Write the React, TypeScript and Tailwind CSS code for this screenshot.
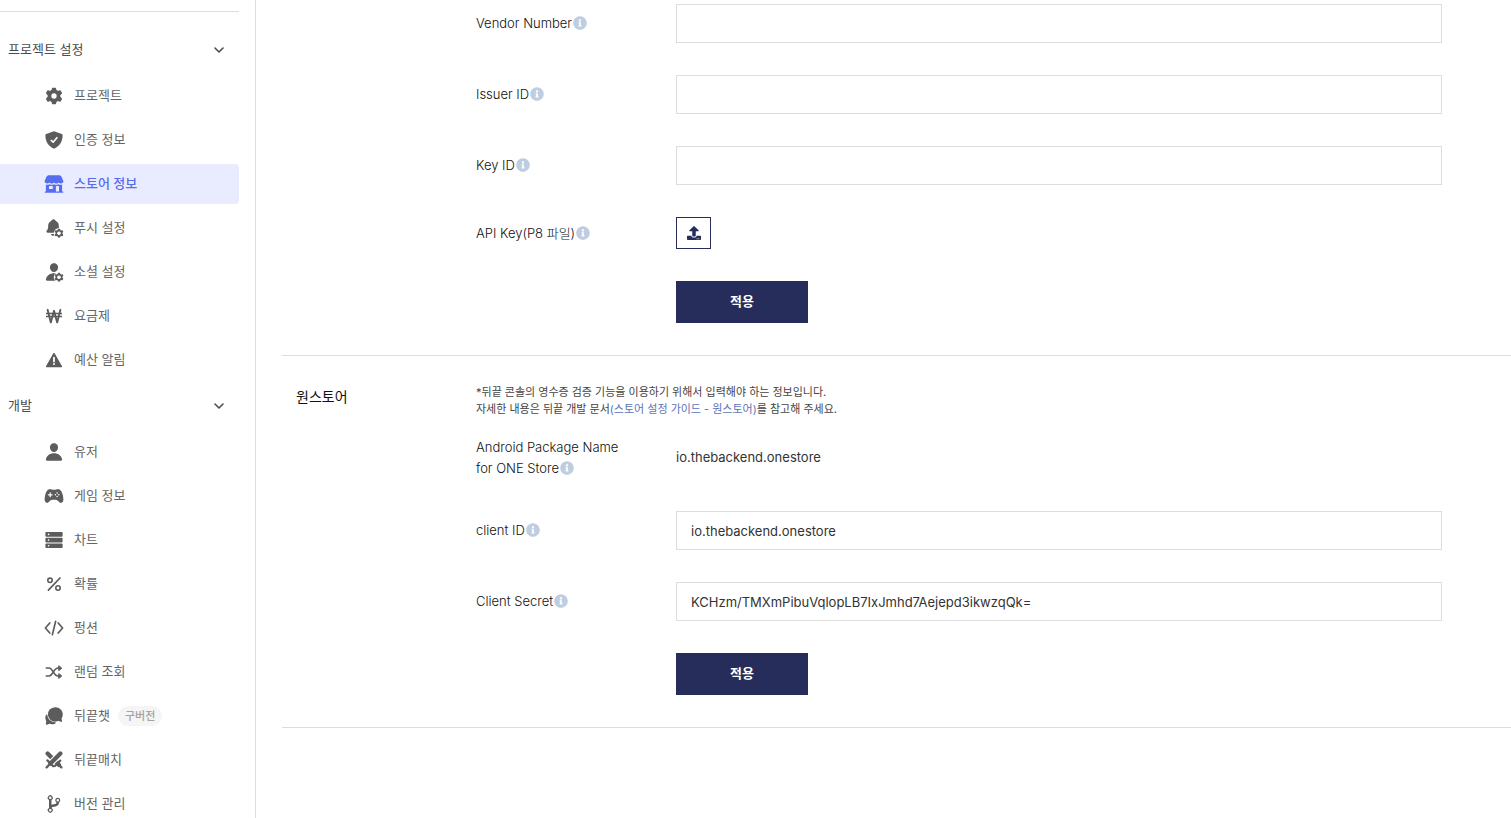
import { ReactNode, useState } from "react";
import clsx from "clsx";
import { IconType } from "react-icons";
import { FaGear } from "react-icons/fa6";
import { FaInfoCircle, FaUpload } from "react-icons/fa";
import {
  IoChatbubbles,
  IoGameController,
  IoGitBranch,
  IoNotifications,
  IoPerson,
  IoStorefront,
} from "react-icons/io5";

type MenuItem = { id: string; label: string; icon: ReactNode; badge?: string };

function Glyph({ children }: { children: ReactNode }) {
  return (
    <svg
      viewBox="0 0 20 20"
      width="20"
      height="20"
      fill="none"
      stroke="currentColor"
      strokeWidth="1.6"
      strokeLinecap="round"
      strokeLinejoin="round"
    >
      {children}
    </svg>
  );
}

function Gear() {
  return (
    <svg viewBox="0 0 20 20" width="20" height="20">
      <FaGear x={1.5} y={1.5} size={17} />
    </svg>
  );
}

function ShieldCheck() {
  return (
    <Glyph>
      <path
        d="M10 1.2 L17.8 4 Q18.7 4.4 18.6 5.5 C18.6 11.8 15.4 16.2 10.6 18.4 Q10 18.7 9.4 18.4 C4.6 16.2 1.4 11.8 1.4 5.5 Q1.3 4.4 2.2 4 Z"
        fill="currentColor"
        stroke="none"
      />
      <path d="M6.8 10 L9.1 12.2 L13.4 7.2" stroke="white" strokeLinecap="butt" />
    </Glyph>
  );
}

function WithGear({ Icon, size }: { Icon: IconType; size: number }) {
  return (
    <svg viewBox="0 0 20 20" width="20" height="20">
      <Icon size={size} />
      <circle cx="15" cy="15.2" r="5.2" fill="white" />
      <FaGear x={10.4} y={10.6} size={9.2} />
      <circle cx="15" cy="15.2" r="1.7" fill="white" />
    </svg>
  );
}

function Won() {
  return (
    <Glyph>
      <path d="M3.6 3.8 L6.8 16.4 L10 4.8 L13.2 16.4 L16.4 3.8" strokeWidth="1.9" />
      <path d="M2 7.5 H18 M2 10.5 H18" strokeWidth="1.3" strokeLinecap="butt" />
    </Glyph>
  );
}

function Warning() {
  return (
    <Glyph>
      <path d="M10 3.6 L17.4 16.6 H2.6 Z" fill="currentColor" strokeWidth="1.4" />
      <path d="M10 7.6 V11.6 M10 14 V14.2" stroke="white" strokeWidth="1.8" />
    </Glyph>
  );
}

function Server() {
  return (
    <Glyph>
      <g fill="currentColor" stroke="none">
        <rect x="1.4" y="2" width="17.2" height="4.7" rx="1" />
        <rect x="1.4" y="7.7" width="17.2" height="4.7" rx="1" />
        <rect x="1.4" y="13.4" width="17.2" height="4.7" rx="1" />
      </g>
      <path d="M4.6 4.3 V4.4 M4.6 10 V10.1 M4.6 15.7 V15.8" stroke="white" />
    </Glyph>
  );
}

function Percent() {
  return (
    <Glyph>
      <circle cx="6" cy="6.3" r="2.2" />
      <circle cx="14" cy="14" r="2.2" />
      <path d="M16 4 L4.4 16.2" strokeWidth="1.7" />
    </Glyph>
  );
}

function Code() {
  return (
    <Glyph>
      <path d="M5.8 5 L1.4 10 L5.8 15 M14.2 5 L18.6 10 L14.2 15 M11.6 3.4 L8.4 16.6" strokeWidth="1.7" />
    </Glyph>
  );
}

function Shuffle() {
  return (
    <Glyph>
      <path d="M2.4 6 H5 C9 6 9.6 14 14 14 H15.4 M2.4 14 H5 C9 14 9.6 6 14 6 H15.4" strokeWidth="1.7" />
      <path d="M15 4 L17.8 6.2 L15 8.4 Z M15 11.8 L17.8 14 L15 16.2 Z" fill="currentColor" strokeWidth="1" />
    </Glyph>
  );
}

function Swords() {
  return (
    <Glyph>
      <path d="M3.6 3.6 L15 15" strokeWidth="4.2" />
      <path d="M10.8 16 L16.2 10.6 M15 15 L17.4 17.4" strokeWidth="2.2" />
      <path d="M16.4 3.6 L6.4 13.6" stroke="white" strokeWidth="6.4" strokeLinecap="butt" />
      <path d="M16.4 3.6 L6.4 13.6" strokeWidth="4.2" />
      <path d="M3.4 10.4 L9.2 16.2 M5.6 14.4 L2.6 17.4" strokeWidth="2.2" />
    </Glyph>
  );
}

const PROJECT_MENU: MenuItem[] = [
  { id: "project", label: "프로젝트", icon: <Gear /> },
  { id: "auth", label: "인증 정보", icon: <ShieldCheck /> },
  { id: "store", label: "스토어 정보", icon: <IoStorefront size={20} /> },
  { id: "push", label: "푸시 설정", icon: <WithGear Icon={IoNotifications} size={19} /> },
  { id: "social", label: "소셜 설정", icon: <WithGear Icon={IoPerson} size={20} /> },
  { id: "plan", label: "요금제", icon: <Won /> },
  { id: "budget", label: "예산 알림", icon: <Warning /> },
];

const DEV_MENU: MenuItem[] = [
  { id: "user", label: "유저", icon: <IoPerson size={20} /> },
  { id: "game", label: "게임 정보", icon: <IoGameController size={20} /> },
  { id: "chart", label: "차트", icon: <Server /> },
  { id: "probability", label: "확률", icon: <Percent /> },
  { id: "function", label: "펑션", icon: <Code /> },
  { id: "random", label: "랜덤 조회", icon: <Shuffle /> },
  { id: "chat", label: "뒤끝챗", icon: <IoChatbubbles size={20} />, badge: "구버전" },
  { id: "match", label: "뒤끝매치", icon: <Swords /> },
  { id: "version", label: "버전 관리", icon: <IoGitBranch size={20} /> },
];

type MenuProps = {
  title: string;
  items: MenuItem[];
  active: string;
  onSelect: (id: string) => void;
};

function MenuGroup({ title, items, active, onSelect }: MenuProps) {
  const [open, setOpen] = useState(true);

  return (
    <div>
      <button
        onClick={() => setOpen(!open)}
        className="flex h-10 w-full items-center justify-between pr-2.5 pl-2 text-[#4b4b4b]"
      >
        {title}
        <span className={clsx(!open && "rotate-180")}>
          <Glyph>
            <path d="M6 8 L10 12 L14 8" />
          </Glyph>
        </span>
      </button>
      {open && (
        <ul className="my-1.5 flex flex-col gap-1">
          {items.map((item) => (
            <li key={item.id}>
              <button
                onClick={() => onSelect(item.id)}
                className={clsx(
                  "flex h-10 w-full items-center rounded-r pl-11",
                  active === item.id ? "bg-[#e9ecff] font-medium text-[#566df0]" : "text-[#666666]"
                )}
              >
                <span
                  className={clsx(
                    "mr-2.5 flex w-5 justify-center",
                    active !== item.id && "text-[#5c5c5c]"
                  )}
                >
                  {item.icon}
                </span>
                {item.label}
                {item.badge && (
                  <span className="ml-2 rounded-full bg-[#f5f5f5] px-[7px] text-[11px] leading-5 font-medium text-[#a3a3a3]">
                    {item.badge}
                  </span>
                )}
              </button>
            </li>
          ))}
        </ul>
      )}
    </div>
  );
}

function Info() {
  return <FaInfoCircle size={14} className="ml-px inline align-[-2px] text-[#bfcde0]" />;
}

function Row({ label, htmlFor, children }: { label: ReactNode; htmlFor?: string; children: ReactNode }) {
  return (
    <div className="flex items-center">
      <label htmlFor={htmlFor} className="w-[200px] shrink-0 leading-[21px] font-light text-[#111111]">
        {label}
        <Info />
      </label>
      <div className="flex flex-1">{children}</div>
    </div>
  );
}

function TextRow({ id, label, value = "" }: { id: string; label: string; value?: string }) {
  return (
    <Row label={label} htmlFor={id}>
      <input
        id={id}
        type="text"
        defaultValue={value}
        className="h-[39px] w-full border border-[#dddddd] px-3.5 outline-none focus:border-[#272d5b]"
      />
    </Row>
  );
}

function ApplyButton() {
  return (
    <button className="ml-[200px] h-[42px] w-[132px] self-start bg-[#272d5b] font-bold text-white">
      적용
    </button>
  );
}

export default function App() {
  const [active, setActive] = useState("store");

  return (
    <div className="flex h-screen overflow-hidden bg-white font-['Inter','Noto_Sans_CJK_KR',sans-serif] text-[13px] text-[#333333]">
      <aside className="w-64 shrink-0 overflow-hidden border-r border-[#dddddd] pt-[11px] pr-4">
        <hr className="mb-[18px] border-[#dddddd]" />
        <MenuGroup title="프로젝트 설정" items={PROJECT_MENU} active={active} onSelect={setActive} />
        <MenuGroup title="개발" items={DEV_MENU} active={active} onSelect={setActive} />
      </aside>

      <main className="flex-1 overflow-hidden pl-[26px]">
        <section className="flex border-b border-[#dddddd] pt-1 pr-[69px] pb-8 pl-[194px]">
          <div className="flex flex-1 flex-col gap-8">
            <TextRow id="vendor" label="Vendor Number" />
            <TextRow id="issuer" label="Issuer ID" />
            <TextRow id="key" label="Key ID" />
            <Row label="API Key(P8 파일)" htmlFor="p8">
              <button
                id="p8"
                aria-label="업로드"
                className="flex h-8 w-[35px] items-center justify-center border border-[#272d5b] text-[#272d5b]"
              >
                <FaUpload size={14} />
              </button>
            </Row>
            <ApplyButton />
          </div>
        </section>

        <section className="flex border-b border-[#dddddd] pt-7 pr-[69px] pb-8 pl-3.5">
          <h2 className="mt-0.5 w-[180px] shrink-0 text-sm leading-[21px] text-[#111111]">원스토어</h2>
          <div className="flex-1">
            <p className="mb-[19px] text-[11px] leading-[17px] text-[#444444]">
              *뒤끝 콘솔의 영수증 검증 기능을 이용하기 위해서 입력해야 하는 정보입니다.
              <br />
              자세한 내용은 뒤끝 개발 문서
              <a href="#guide" className="text-[#5b74b8]">
                (스토어 설정 가이드 - 원스토어)
              </a>
              를 참고해 주세요.
            </p>
            <div className="flex flex-col gap-8">
              <Row
                label={
                  <>
                    Android Package Name
                    <br />
                    for ONE Store
                  </>
                }
              >
                io.thebackend.onestore
              </Row>
              <TextRow id="client-id" label="client ID" value="io.thebackend.onestore" />
              <TextRow
                id="client-secret"
                label="Client Secret"
                value="KCHzm/TMXmPibuVqlopLB7IxJmhd7Aejepd3ikwzqQk="
              />
              <ApplyButton />
            </div>
          </div>
        </section>
      </main>
    </div>
  );
}
